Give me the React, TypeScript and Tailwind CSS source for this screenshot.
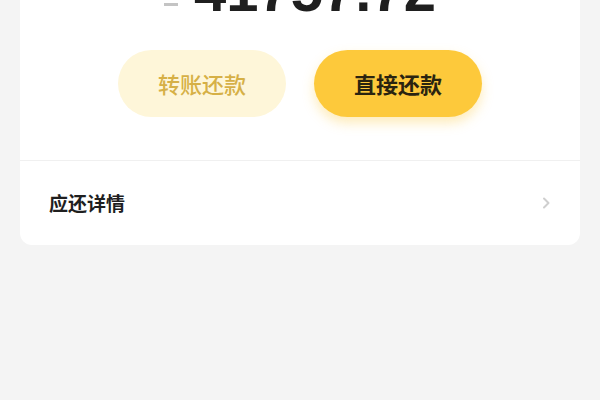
export default function App() {
  return (
    <div
      className="h-[400px] w-[600px] overflow-hidden bg-[#f4f4f4] px-5"
      style={{ fontFamily: '"Noto Sans CJK SC", "Liberation Sans", sans-serif' }}
    >
      <div className="-mt-[60px] overflow-hidden rounded-xl bg-white">
        {/* amount, mostly scrolled out of view */}
        <div className="flex h-[72px] items-end justify-center">
          <div className="flex items-end leading-none">
            <span className="mb-[6px] mr-4 h-[3px] w-[14px] bg-[#c4c4c4]" />
            <span className="font-['Liberation_Sans',sans-serif] text-[58px] font-bold text-[#1f1f1f] leading-[0.73]">
              41757.72
            </span>
          </div>
        </div>

        <div className="flex justify-center gap-7 pt-[38px] pb-[43px]">
          <button className="flex h-[67px] w-[168px] items-center justify-center rounded-full bg-[#fef6d9] text-[22px] font-medium text-[#d6b046]">
            转账还款
          </button>
          <button className="flex h-[67px] w-[168px] items-center justify-center rounded-full bg-[#fdc93b] text-[22px] font-bold text-[#2a2410] shadow-[0_6px_12px_rgba(253,201,59,0.35)]">
            直接还款
          </button>
        </div>

        <div className="h-px bg-[#f0f0f0]" />

        <div className="flex h-[84px] items-center justify-between px-[29px]">
          <span className="text-[19px] font-semibold text-[#1f1f1f]">应还详情</span>
          <svg width="10" height="14" viewBox="0 0 10 14" fill="none">
            <path d="M3 2.5 L7.5 7 L3 11.5" stroke="#cfcfcf" strokeWidth="2" strokeLinecap="round" strokeLinejoin="round" />
          </svg>
        </div>
      </div>
    </div>
  );
}
